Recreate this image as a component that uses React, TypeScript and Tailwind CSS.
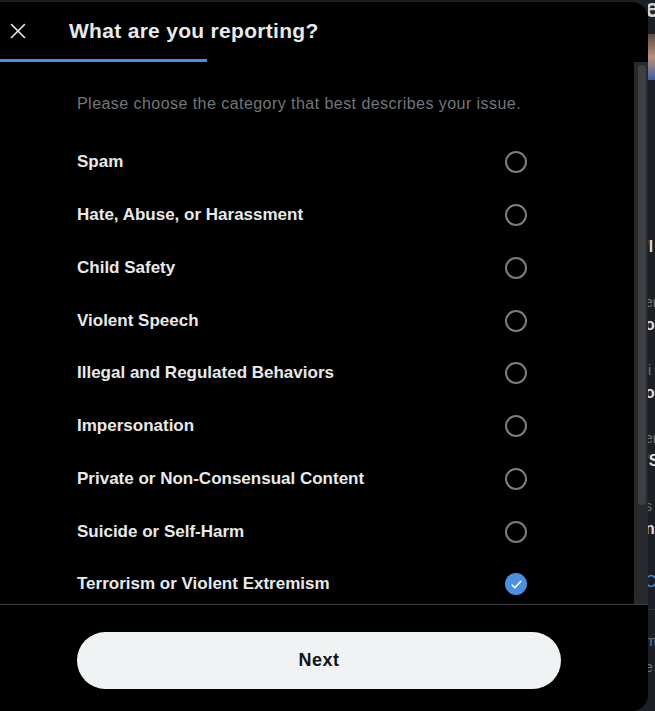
import { X } from 'lucide-react';

const categories = [
  'Spam',
  'Hate, Abuse, or Harassment',
  'Child Safety',
  'Violent Speech',
  'Illegal and Regulated Behaviors',
  'Impersonation',
  'Private or Non-Consensual Content',
  'Suicide or Self-Harm',
  'Terrorism or Violent Extremism',
];

function Radio({ checked }: { checked: boolean }) {
  if (checked) {
    return (
      <span className="flex h-[22px] w-[22px] items-center justify-center rounded-full bg-[#4a8fe2]">
        <svg className="h-[13px] w-[13px]" viewBox="0 0 24 24" fill="none" stroke="white" strokeWidth={3} strokeLinecap="round" strokeLinejoin="round">
          <path d="M4 13l5 5L20 6" />
        </svg>
      </span>
    );
  }
  return <span className="block h-[22px] w-[22px] rounded-full border-2 border-[#7a7e82]" />;
}

function Fragment({ h, text, className }: { h: string; text: string; className: string }) {
  return (
    <div className={`${h} overflow-hidden whitespace-nowrap -ml-[3px] ${className}`}>{text}</div>
  );
}

export default function App() {
  return (
    <div className="flex h-[711px] w-[655px] overflow-hidden bg-[#1c2026] font-['Liberation_Sans',Arial,sans-serif]">
      <div className="mt-[2px] flex h-[709px] w-[648px] shrink-0 flex-col overflow-hidden rounded-r-2xl bg-black">
        {/* header */}
        <div className="flex h-[57px] shrink-0 items-center">
          <button type="button" className="ml-[5px] flex h-[26px] w-[26px] items-center justify-center text-[#e7e9ea]" aria-label="Close">
            <X className="h-[26px] w-[26px]" strokeWidth={1.5} />
          </button>
          <h1 className="ml-[38px] text-[21px] font-bold leading-6 tracking-[0.3px] text-[#e7e9ea]">What are you reporting?</h1>
        </div>
        <div className="h-[3px] w-[207px] shrink-0 bg-[#4a8fe2]" />

        {/* body */}
        <div className="flex min-h-0 flex-1">
          <div className="w-[634px] overflow-hidden pl-[77px] pt-[32px]">
            <p className="text-[16px] leading-5 tracking-[0.45px] text-[#71767b]">
              Please choose the category that best describes your issue.
            </p>
            <div className="mt-[22px]">
              {categories.map((c, i) => (
                <div key={c} className="flex h-[52.75px] w-[450px] items-center justify-between">
                  <span className="text-[17px] font-bold leading-5 text-[#e7e9ea]">{c}</span>
                  <Radio checked={i === categories.length - 1} />
                </div>
              ))}
            </div>
          </div>
          <div className="w-[14px] shrink-0 bg-[#28292c] pt-[3px]">
            <div className="ml-[4px] h-[440px] w-[8px] rounded-full bg-[#3e3f42]" />
          </div>
        </div>

        {/* footer */}
        <div className="h-px shrink-0 bg-[#3a3c3f] shadow-[0_-2px_4px_rgba(255,255,255,0.08)]" />
        <div className="h-[106px] shrink-0 pl-[77px] pt-[27px]">
          <button type="button" className="flex h-[57px] w-[484px] items-center justify-center rounded-full bg-[#eff3f4] text-[18px] font-bold tracking-[0.5px] text-[#0f1419]">
            Next
          </button>
        </div>
      </div>

      {/* background page peeking through */}
      <div className="flex w-[7px] shrink-0 flex-col overflow-hidden text-[#d9dde0]">
        <Fragment h="h-[24px]" text="e" className="-mt-[6px] text-[26px] font-bold leading-[28px] text-[#cfd3d6]" />
        <div className="mt-[16px] h-[46px] bg-gradient-to-b from-[#5a4c46] via-[#b8917c] to-[#3d5d9c]" />
        <div className="h-[157px]" />
        <Fragment h="h-[20px]" text="'l" className="text-[16px] font-bold leading-5" />
        <div className="h-[36px]" />
        <Fragment h="h-[18px]" text="er" className="text-[14px] leading-[18px] text-[#71767b]" />
        <div className="h-[4px]" />
        <Fragment h="h-[20px]" text="o" className="text-[16px] font-bold leading-5" />
        <div className="h-[26px]" />
        <Fragment h="h-[18px]" text="li" className="text-[14px] leading-[18px] text-[#71767b]" />
        <div className="h-[4px]" />
        <Fragment h="h-[20px]" text="o" className="text-[16px] font-bold leading-5" />
        <div className="h-[26px]" />
        <Fragment h="h-[18px]" text="er" className="text-[14px] leading-[18px] text-[#71767b]" />
        <div className="h-[4px]" />
        <Fragment h="h-[20px]" text="'S" className="text-[16px] font-bold leading-5" />
        <div className="h-[26px]" />
        <Fragment h="h-[18px]" text="s" className="text-[14px] leading-[18px] text-[#71767b]" />
        <div className="h-[4px]" />
        <Fragment h="h-[20px]" text="n" className="text-[16px] font-bold leading-5" />
        <div className="h-[33px]" />
        <Fragment h="h-[20px]" text="C" className="text-[16px] leading-5 text-[#4a8fe2]" />
        <div className="h-[18px] border-b border-[#2f3336]" />
        <div className="h-[22px]" />
        <Fragment h="h-[18px]" text="m" className="text-[14px] leading-[18px] text-[#71767b]" />
        <div className="h-[8px]" />
        <Fragment h="h-[18px]" text="e" className="text-[14px] leading-[18px] text-[#71767b]" />
      </div>
    </div>
  );
}
